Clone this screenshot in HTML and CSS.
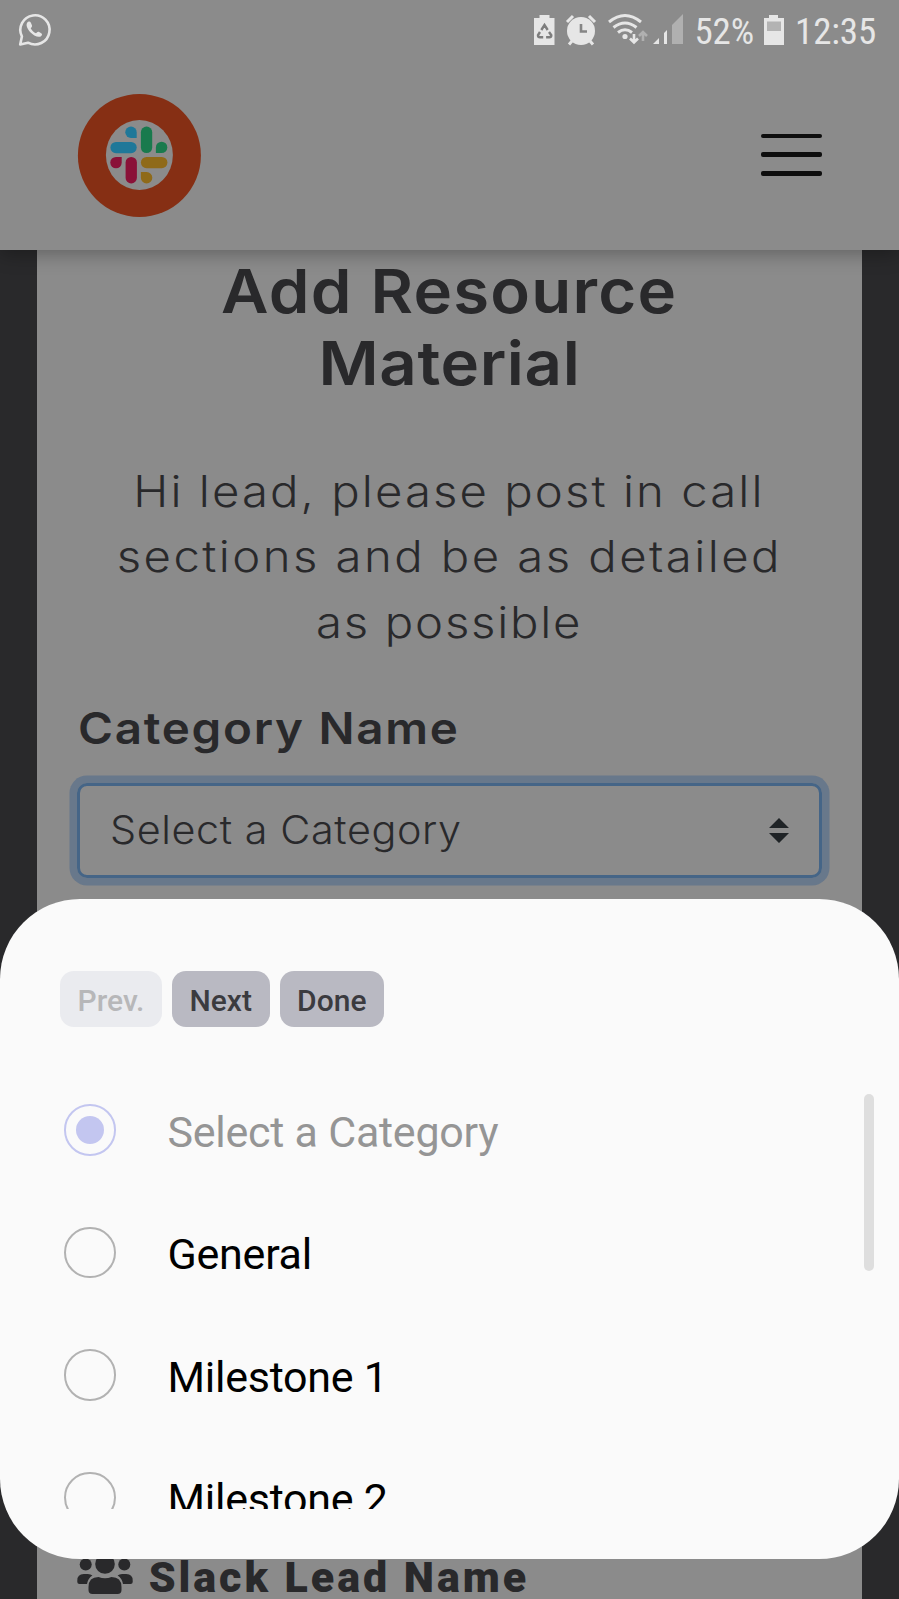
FILE: index.html
```html
<!DOCTYPE html>
<html lang="en">
<head>
<meta charset="utf-8">
<title>Add Resource Material</title>
<link rel="stylesheet" href="styles.css">
</head>
<body>
<div class="screen">
  <header class="top">
    <div class="status">
      <svg class="whatsapp" width="36" height="36" viewBox="0 0 36 36" fill="none" stroke="#e6e6e6" stroke-width="2.6"><path d="M3.200 32.400l1.700-8A14.600 14.600 0 1 1 11 30.700z" stroke-linejoin="round"/><path d="M11.200 9.800c-3 2-1.600 6.700 2.400 10.700s8.600 5.700 10.900 3.200c1.300-1.700.3-2.400-2.300-3.800-1.600-.8-2 .3-3.200 1.400-2.200-.8-4.200-2.800-5.300-5 1-1.100 1.700-1.700 1.200-3-1-2.800-1.700-4.500-3.700-3.500z" fill="#e6e6e6" stroke="none"/></svg>
      <svg class="signals" width="156" height="34" viewBox="532 12 156 34" fill="#e6e6e6">
        <path d="M534 18h5.500v-3h10v3h5v27H534z"/>
        <g fill="none" stroke="#7d7d7d" stroke-width="2.400"><path d="M541.300 30l3.200-5 3.200 5M540 32l-2 3.200q0 2 2 2h3.200M549 32l2.300 3.200q0 2-2 2h-3.200"/></g>
        <circle cx="581" cy="31" r="14"/>
        <path d="M567 22l6-6M595 22l-6-6M572 41l-3 3.500M590 41l3 3.500" stroke="#e6e6e6" stroke-width="3"/>
        <path d="M581 24v7.500h6" fill="none" stroke="#858585" stroke-width="2.600"/>
        <g fill="none" stroke="#e6e6e6" stroke-width="3"><path d="M609 22q16-13 32 0M613.500 27.500q11.500-9 23 0M618 32.500q7-5.500 14 0"/></g>
        <circle cx="625" cy="36.500" r="2.600"/>
        <path d="M634 34v8M630 38.500l4 4 4-4" fill="none" stroke="#e6e6e6" stroke-width="2.600"/>
        <path d="M643 41v-8M639 36l4-4 4 4" fill="none" stroke="#b0b0b0" stroke-width="2.600"/>
        <path d="M653 44l6-6v6zM664 44V33l3-3v14z"/>
        <path d="M672 44V25l11-11v30z" fill="#b0b0b0"/>
      </svg>
      <span class="percent">52%</span>
      <svg class="battery" width="20" height="30" viewBox="0 0 20 30"><path d="M0 3h5V0h9v3h6v27H0z" fill="#e6e6e6"/><path d="M3 6.500h14V16H3z" fill="#b3b3b3"/></svg>
      <span class="clock">12:35</span>
    </div>
    <div class="navbar">
      <svg class="logo" width="124" height="124" viewBox="0 0 124 124">
        <circle cx="62.400" cy="61.400" r="61.500" fill="#862f14"/><ellipse cx="62.400" cy="61" rx="33.500" ry="35" fill="#8b8b8b"/>
        <g transform="translate(.4 -.6)">
        <path d="M59.300 44.500h-5.700a5.700 5.700 0 1 1 5.700-5.700z" fill="#1f7899"/><rect x="33" y="48.500" width="26.300" height="11.300" rx="5.600" fill="#1f7899"/>
        <rect x="63.500" y="33.200" width="11.300" height="26.500" rx="5.600" fill="#197a4d"/><path d="M78.500 59.700V54a5.700 5.700 0 1 1 5.700 5.700z" fill="#197a4d"/>
        <path d="M44.300 63.500v5.700a5.700 5.700 0 1 1-5.700-5.700z" fill="#8a1138"/><rect x="48.200" y="63.500" width="11.300" height="26.500" rx="5.600" fill="#8a1138"/>
        <rect x="63.500" y="63.500" width="26.500" height="11.300" rx="5.600" fill="#8f6a19"/><path d="M63.500 78.700h5.700a5.700 5.700 0 1 1-5.700 5.700z" fill="#8f6a19"/>
        </g>
      </svg>
      <div class="menu"><i></i><i></i><i></i></div>
    </div>
  </header>
  <main class="card">
    <h1 class="title"><span class="t1">Add Resource</span><span class="t2">Material</span></h1>
    <p class="intro"><span class="p1">Hi lead, please post in call</span><span class="p2">sections and be as detailed</span><span class="p3">as possible</span></p>
    <div class="label">Category Name</div>
    <div class="select"><span>Select a Category</span>
      <svg width="20" height="25" viewBox="0 0 20 25" fill="#1f2326"><path d="M10 0l10 10H0zM10 25L0 15h20z"/></svg>
    </div>
    <div class="lead">
      <svg width="56" height="42" viewBox="0 0 56 42" fill="#29292b"><circle cx="8.700" cy="10.500" r="6"/><circle cx="47.300" cy="10.500" r="6"/><circle cx="28" cy="10" r="9.800"/><path d="M0.300 30v-3.500q0-6.500 6.500-6.500h4q3 0 4.600 1.600-4.400 2.600-5.400 8.400H2.500q-2.200 0-2.200-2zM55.700 28v-1.500q0-6.500-6.500-6.500h-4q-3 0-4.600 1.600 4.400 2.600 5.400 8.400h7.500q2.200 0 2.200-2zM11.500 36v-3q0-10 10-10 6.500 2.600 13 0 10 0 10 10v3q0 4-4 4h-25q-4 0-4-4z"/></svg>
      <span>Slack Lead Name</span>
    </div>
  </main>
  <section class="sheet">
    <div class="actions"><button class="btn off">Prev.</button><button class="btn">Next</button><button class="btn">Done</button></div>
    <div class="list">
      <div class="option chosen"><i class="radio"></i><span>Select a Category</span></div>
      <div class="option"><i class="radio"></i><span>General</span></div>
      <div class="option"><i class="radio"></i><span>Milestone 1</span></div>
      <div class="option"><i class="radio"></i><span>Milestone 2</span></div>
    </div>
    <div class="scrollbar"></div>
  </section>
</div>
</body>
</html>
```

FILE: styles.css
```css
* { box-sizing: border-box; }
body { margin: 0; background: #29292b; font-family: Roboto, sans-serif; }
.screen { position: relative; width: 899px; height: 1599px; overflow: hidden; }

.top { position: relative; z-index: 1; height: 250px; background: #8b8b8b; box-shadow: 0 4px 18px rgba(0, 0, 0, .3); }
.status { display: flex; align-items: flex-start; height: 60px; padding: 12px 0 0 17px; color: #e6e6e6; }
.whatsapp { margin-top: 0; }
.signals { margin-left: 479px; }
.percent, .clock { font-size: 37px; line-height: 40px; font-stretch: 75%; white-space: nowrap; }
.percent { width: 68.5px; padding-left: 6.500px; letter-spacing: -.2px; }
.battery { margin: 3px 0 0 7.500px; }
.clock { margin-left: 11px; letter-spacing: -.1px; }
.navbar { display: flex; justify-content: space-between; align-items: flex-start; padding: 33.500px 77px 0 77.200px; }
.logo { display: block; overflow: visible; }
.menu { display: flex; flex-direction: column; gap: 14px; width: 61px; margin-top: 40px; }
.menu i { height: 4.800px; border-radius: 2px; background: #0e0e0e; }

.card { width: 824.500px; height: 1349px; margin-left: 37.200px; padding: 4.500px 40px 0; background: #8b8b8b; color: #29292b; font-family: Inter, sans-serif; }
.title { display: flex; flex-direction: column; align-items: center; margin: 0; font-size: 61px; line-height: 72px; font-weight: 620; }
.title span { transform: scaleX(1.07); }
.t1 { letter-spacing: 1.150px; }
.t2 { letter-spacing: .6px; }
.intro { display: flex; flex-direction: column; align-items: center; margin: 60px 0 0; font-size: 43px; line-height: 65.800px; font-weight: 320; white-space: nowrap; }
.intro span { transform: scaleX(1.1); }
.p1 { letter-spacing: 1.880px; }
.p2 { letter-spacing: 2.200px; }
.p3 { letter-spacing: 1.600px; }
.label { width: max-content; margin: 45.400px 0 0 .5px; font-size: 44px; line-height: 54px; font-weight: 630; letter-spacing: 1.600px; white-space: nowrap; transform: scaleX(1.08); transform-origin: left; }
.select { display: flex; align-items: center; justify-content: space-between; height: 95.300px; margin-top: 27.400px; padding: 0 30px 0 29.500px; border: 3px solid #456587; border-radius: 10px; box-shadow: 0 0 0 7.500px #68788b; font-size: 39px; font-weight: 320; letter-spacing: .55px; }
.select span { padding-bottom: 2px; transform: scaleX(1.06); transform-origin: left; }
.lead { display: flex; margin-top: 672px; font: 900 43px/54px Roboto, sans-serif; letter-spacing: 2.950px; white-space: nowrap; }
.lead svg { margin: 4.500px 16px 0 -.5px; }

.sheet { position: absolute; z-index: 2; left: 0; top: 899.300px; width: 899px; height: 659.500px; padding: 71.700px 0 0 60px; border-radius: 80px; background: #fafafa; }
.actions { display: flex; gap: 10px; }
.btn { height: 56px; padding: 4px 17.600px 0; border: 0; border-radius: 14px; background: #b9b9c2; color: #3b3b3f; font: 500 30px/52px Roboto, sans-serif; }
.btn.off { background: #eaebef; color: #b7b7b9; }
.list { height: 440.300px; margin-top: 41.700px; overflow: hidden; }
.option { display: flex; align-items: center; height: 122.500px; padding-left: 4px; color: #000; font-size: 43px; letter-spacing: -.25px; }
.option span { margin-left: 52px; padding-top: 3.400px; }
.radio { display: flex; align-items: center; justify-content: center; width: 51.500px; height: 51.500px; border: 2.500px solid #b2b2b2; border-radius: 50%; }
.chosen { color: #959595; }
.chosen .radio { border-color: #c3c6f0; }
.chosen .radio::after { content: ""; width: 28px; height: 28px; border-radius: 50%; background: #c3c6f0; }
.scrollbar { position: absolute; left: 864px; top: 194.800px; width: 10px; height: 177px; border-radius: 5px; background: #dedede; }
```
